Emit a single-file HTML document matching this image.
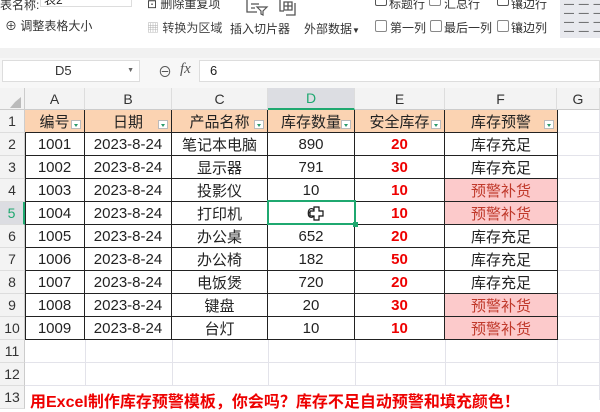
<!DOCTYPE html>
<html><head><meta charset="utf-8"><style>
*{margin:0;padding:0;box-sizing:border-box}
body{width:600px;height:400px;overflow:hidden;background:#fff;position:relative;font-family:"Liberation Sans","Noto Sans CJK SC",sans-serif;color:#222}
.a{position:absolute;white-space:nowrap}
.t{font-size:12px;color:#333}
.cb{position:absolute;width:12px;height:12px;border:1px solid #888;background:#fff;border-radius:2px}
.c{position:absolute;display:flex;align-items:center;justify-content:center;font-size:15px;color:#222;border-right:1px solid #222;border-bottom:1px solid #222;height:23px}
.h{background:#fbd3b2}
.p{background:#fccacb;color:#c0392b}
.r{color:#e00;font-weight:bold}
.dd{position:absolute;right:3px;bottom:3px;width:10px;height:9px;background:#fff;border:1px solid #bbb}
.dd:after{content:"";position:absolute;left:2px;top:3px;border:2.5px solid transparent;border-top:3px solid #2a9a6a}
.rh{position:absolute;left:0;width:25px;height:23px;font-size:14px;color:#333;display:flex;align-items:center;justify-content:center;background:#f3f3f3;border-bottom:1px solid #ddd;border-right:1px solid #ccc}
.ch{position:absolute;top:88px;height:22px;font-size:14px;color:#333;display:flex;align-items:center;justify-content:center;background:#f3f3f3;border-right:1px solid #ddd;border-bottom:1px solid #ccc}
.gl{position:absolute;background:#e3e3ea}
</style></head><body>
<!-- ribbon -->
<div class="a t" style="left:0;top:-4px">表名称:</div>
<div class="a" style="left:40px;top:-6px;width:92px;height:13px;border:1px solid #ddd;font-size:12px;padding-left:3px;line-height:11px">表2</div>
<div class="a t" style="left:5px;top:17px">⊕ 调整表格大小</div>
<div class="a t" style="left:147px;top:-5px">⊡ 删除重复项</div>
<div class="a t" style="left:147px;top:19px;color:#444"><span style="color:#aaa">▦</span> 转换为区域</div>
<svg class="a" style="left:245px;top:0" width="26" height="16"><path d="M2 0V12H12M6 4H14M6 8H10" stroke="#555" stroke-width="1.3" fill="none"/><path d="M12 7H22L18 11V15L16 14V11Z" stroke="#555" stroke-width="1.2" fill="#fff"/></svg>
<div class="a t" style="left:230px;top:20px">插入切片器</div>
<svg class="a" style="left:278px;top:0" width="20" height="16"><path d="M2 0V11H6M6 2H14V10H6ZM10 2V10M6 6H14M17 3V15H8" stroke="#555" stroke-width="1.3" fill="none"/></svg>
<div class="a t" style="left:304px;top:20px">外部数据<span style="font-size:8px">▼</span></div>
<div class="cb" style="left:375px;top:-6px;border-color:#555"></div><div class="a t" style="left:389px;top:-5px">标题行</div>
<div class="cb" style="left:429px;top:-6px"></div><div class="a t" style="left:444px;top:-5px">汇总行</div>
<div class="cb" style="left:497px;top:-6px;border-color:#555"></div><div class="a t" style="left:511px;top:-5px">镶边行</div>
<div class="cb" style="left:375px;top:20px"></div><div class="a t" style="left:390px;top:19px">第一列</div>
<div class="cb" style="left:430px;top:20px"></div><div class="a t" style="left:444px;top:19px">最后一列</div>
<div class="cb" style="left:497px;top:20px"></div><div class="a t" style="left:511px;top:19px">镶边列</div>
<div class="a" style="left:560px;top:0;width:40px;height:38px;background:#e8e9ee;font-size:10px;line-height:9px;padding-left:4px;color:#333;letter-spacing:1px">— — —<br>— — —<br>— — —<br>— — —</div>
<div class="a" style="left:0;top:48px;width:600px;height:10px;background:#f1f1f1"></div>
<!-- formula bar -->
<div class="a" style="left:0;top:58px;width:600px;height:30px;background:#f7f7f7"></div>
<div class="a" style="left:2px;top:60px;width:138px;height:22px;background:#fff;border:1px solid #ddd;font-size:13px;color:#333;padding-left:52px;line-height:20px">D5<span style="position:absolute;right:5px;font-size:7px;color:#666">▼</span></div>
<div class="a" style="left:158px;top:62px;font-size:14px;color:#555">⊖</div>
<div class="a" style="left:180px;top:61px;font-size:15px;color:#555;font-style:italic;font-family:'Liberation Serif',serif">fx</div>
<div class="a" style="left:199px;top:60px;width:401px;height:22px;background:#fff;border:1px solid #ddd;font-size:13px;line-height:20px;padding-left:10px">6</div>
<!-- headers -->
<div class="a" style="left:0;top:88px;width:25px;height:22px;background:#f3f3f3;border-right:1px solid #ccc;border-bottom:1px solid #ccc"></div>
<div class="a" style="left:10px;top:97px;border:5px solid transparent;border-right:6px solid #bbb;border-bottom:6px solid #bbb;border-left-color:transparent;border-top-color:transparent"></div>
<div class="ch" style="left:25px;width:60px">A</div>
<div class="ch" style="left:85px;width:87px">B</div>
<div class="ch" style="left:172px;width:96px">C</div>
<div class="ch" style="left:268px;width:87px;background:#dcdde2;color:#1fa870;border-bottom:2px solid #1fa870">D</div>
<div class="ch" style="left:355px;width:90px">E</div>
<div class="ch" style="left:445px;width:112px">F</div>
<div class="ch" style="left:557px;width:43px">G</div>
<!-- row headers -->
<div class="rh" style="top:110px">1</div><div class="rh" style="top:133px">2</div><div class="rh" style="top:156px">3</div><div class="rh" style="top:179px">4</div>
<div class="rh" style="top:202px;background:#dcdde2;color:#1fa870;border-right:2px solid #1fa870">5</div>
<div class="rh" style="top:225px">6</div><div class="rh" style="top:248px">7</div><div class="rh" style="top:271px">8</div><div class="rh" style="top:294px">9</div><div class="rh" style="top:317px">10</div><div class="rh" style="top:340px">11</div><div class="rh" style="top:363px">12</div><div class="rh" style="top:386px">13</div>
<!-- gridlines for empty area -->
<div class="gl" style="left:25px;top:362px;width:575px;height:1px"></div>
<div class="gl" style="left:25px;top:385px;width:575px;height:1px"></div>
<div class="gl" style="left:599px;top:110px;width:1px;height:290px"></div>
<div class="gl" style="left:557px;top:132px;width:43px;height:1px"></div>
<div class="gl" style="left:557px;top:155px;width:43px;height:1px"></div>
<div class="gl" style="left:557px;top:178px;width:43px;height:1px"></div>
<div class="gl" style="left:557px;top:201px;width:43px;height:1px"></div>
<div class="gl" style="left:557px;top:224px;width:43px;height:1px"></div>
<div class="gl" style="left:557px;top:247px;width:43px;height:1px"></div>
<div class="gl" style="left:557px;top:270px;width:43px;height:1px"></div>
<div class="gl" style="left:557px;top:293px;width:43px;height:1px"></div>
<div class="gl" style="left:557px;top:316px;width:43px;height:1px"></div>
<div class="gl" style="left:557px;top:339px;width:43px;height:1px"></div>
<div class="gl" style="left:85px;top:340px;width:1px;height:46px"></div>
<div class="gl" style="left:172px;top:340px;width:1px;height:46px"></div>
<div class="gl" style="left:268px;top:340px;width:1px;height:46px"></div>
<div class="gl" style="left:355px;top:340px;width:1px;height:46px"></div>
<div class="gl" style="left:445px;top:340px;width:1px;height:46px"></div>
<div class="gl" style="left:557px;top:340px;width:1px;height:46px"></div>
<!-- table -->
<div class="a" style="left:25px;top:110px;width:533px;height:230px;border-left:1px solid #222"></div>
<div class="c h" style="left:25px;top:110px;width:60px">编号<i class="dd"></i></div>
<div class="c h" style="left:85px;top:110px;width:87px">日期<i class="dd"></i></div>
<div class="c h" style="left:172px;top:110px;width:96px">产品名称<i class="dd"></i></div>
<div class="c h" style="left:268px;top:110px;width:87px">库存数量<i class="dd"></i></div>
<div class="c h" style="left:355px;top:110px;width:90px">安全库存<i class="dd"></i></div>
<div class="c h" style="left:445px;top:110px;width:113px">库存预警<i class="dd"></i></div>

<div class="c" style="left:25px;top:133px;width:60px">1001</div><div class="c" style="left:85px;top:133px;width:87px">2023-8-24</div><div class="c" style="left:172px;top:133px;width:96px">笔记本电脑</div><div class="c" style="left:268px;top:133px;width:87px">890</div><div class="c r" style="left:355px;top:133px;width:90px">20</div><div class="c" style="left:445px;top:133px;width:113px">库存充足</div>
<div class="c" style="left:25px;top:156px;width:60px">1002</div><div class="c" style="left:85px;top:156px;width:87px">2023-8-24</div><div class="c" style="left:172px;top:156px;width:96px">显示器</div><div class="c" style="left:268px;top:156px;width:87px">791</div><div class="c r" style="left:355px;top:156px;width:90px">30</div><div class="c" style="left:445px;top:156px;width:113px">库存充足</div>
<div class="c" style="left:25px;top:179px;width:60px">1003</div><div class="c" style="left:85px;top:179px;width:87px">2023-8-24</div><div class="c" style="left:172px;top:179px;width:96px">投影仪</div><div class="c" style="left:268px;top:179px;width:87px">10</div><div class="c r" style="left:355px;top:179px;width:90px">10</div><div class="c p" style="left:445px;top:179px;width:113px">预警补货</div>
<div class="c" style="left:25px;top:202px;width:60px">1004</div><div class="c" style="left:85px;top:202px;width:87px">2023-8-24</div><div class="c" style="left:172px;top:202px;width:96px">打印机</div><div class="c" style="left:268px;top:202px;width:87px">6</div><div class="c r" style="left:355px;top:202px;width:90px">10</div><div class="c p" style="left:445px;top:202px;width:113px">预警补货</div>
<div class="c" style="left:25px;top:225px;width:60px">1005</div><div class="c" style="left:85px;top:225px;width:87px">2023-8-24</div><div class="c" style="left:172px;top:225px;width:96px">办公桌</div><div class="c" style="left:268px;top:225px;width:87px">652</div><div class="c r" style="left:355px;top:225px;width:90px">20</div><div class="c" style="left:445px;top:225px;width:113px">库存充足</div>
<div class="c" style="left:25px;top:248px;width:60px">1006</div><div class="c" style="left:85px;top:248px;width:87px">2023-8-24</div><div class="c" style="left:172px;top:248px;width:96px">办公椅</div><div class="c" style="left:268px;top:248px;width:87px">182</div><div class="c r" style="left:355px;top:248px;width:90px">50</div><div class="c" style="left:445px;top:248px;width:113px">库存充足</div>
<div class="c" style="left:25px;top:271px;width:60px">1007</div><div class="c" style="left:85px;top:271px;width:87px">2023-8-24</div><div class="c" style="left:172px;top:271px;width:96px">电饭煲</div><div class="c" style="left:268px;top:271px;width:87px">720</div><div class="c r" style="left:355px;top:271px;width:90px">20</div><div class="c" style="left:445px;top:271px;width:113px">库存充足</div>
<div class="c" style="left:25px;top:294px;width:60px">1008</div><div class="c" style="left:85px;top:294px;width:87px">2023-8-24</div><div class="c" style="left:172px;top:294px;width:96px">键盘</div><div class="c" style="left:268px;top:294px;width:87px">20</div><div class="c r" style="left:355px;top:294px;width:90px">30</div><div class="c p" style="left:445px;top:294px;width:113px">预警补货</div>
<div class="c" style="left:25px;top:317px;width:60px">1009</div><div class="c" style="left:85px;top:317px;width:87px">2023-8-24</div><div class="c" style="left:172px;top:317px;width:96px">台灯</div><div class="c" style="left:268px;top:317px;width:87px">10</div><div class="c r" style="left:355px;top:317px;width:90px">10</div><div class="c p" style="left:445px;top:317px;width:113px">预警补货</div>
<!-- selection -->
<div class="a" style="left:267px;top:200px;width:89px;height:25px;border:2px solid #1fa870"></div>
<div class="a" style="left:353px;top:222px;width:5px;height:5px;background:#1fa870"></div>
<svg class="a" style="left:309px;top:206px" width="16" height="16"><path d="M5 1H10V5H14V10H10V14H5V10H1V5H5Z" fill="#fff" stroke="#111" stroke-width="1.2"/></svg>
<div class="a" style="left:30px;top:388px;font-size:16px;font-weight:bold;color:#e00">用Excel制作库存预警模板，你会吗？库存不足自动预警和填充颜色！</div>
</body></html>
